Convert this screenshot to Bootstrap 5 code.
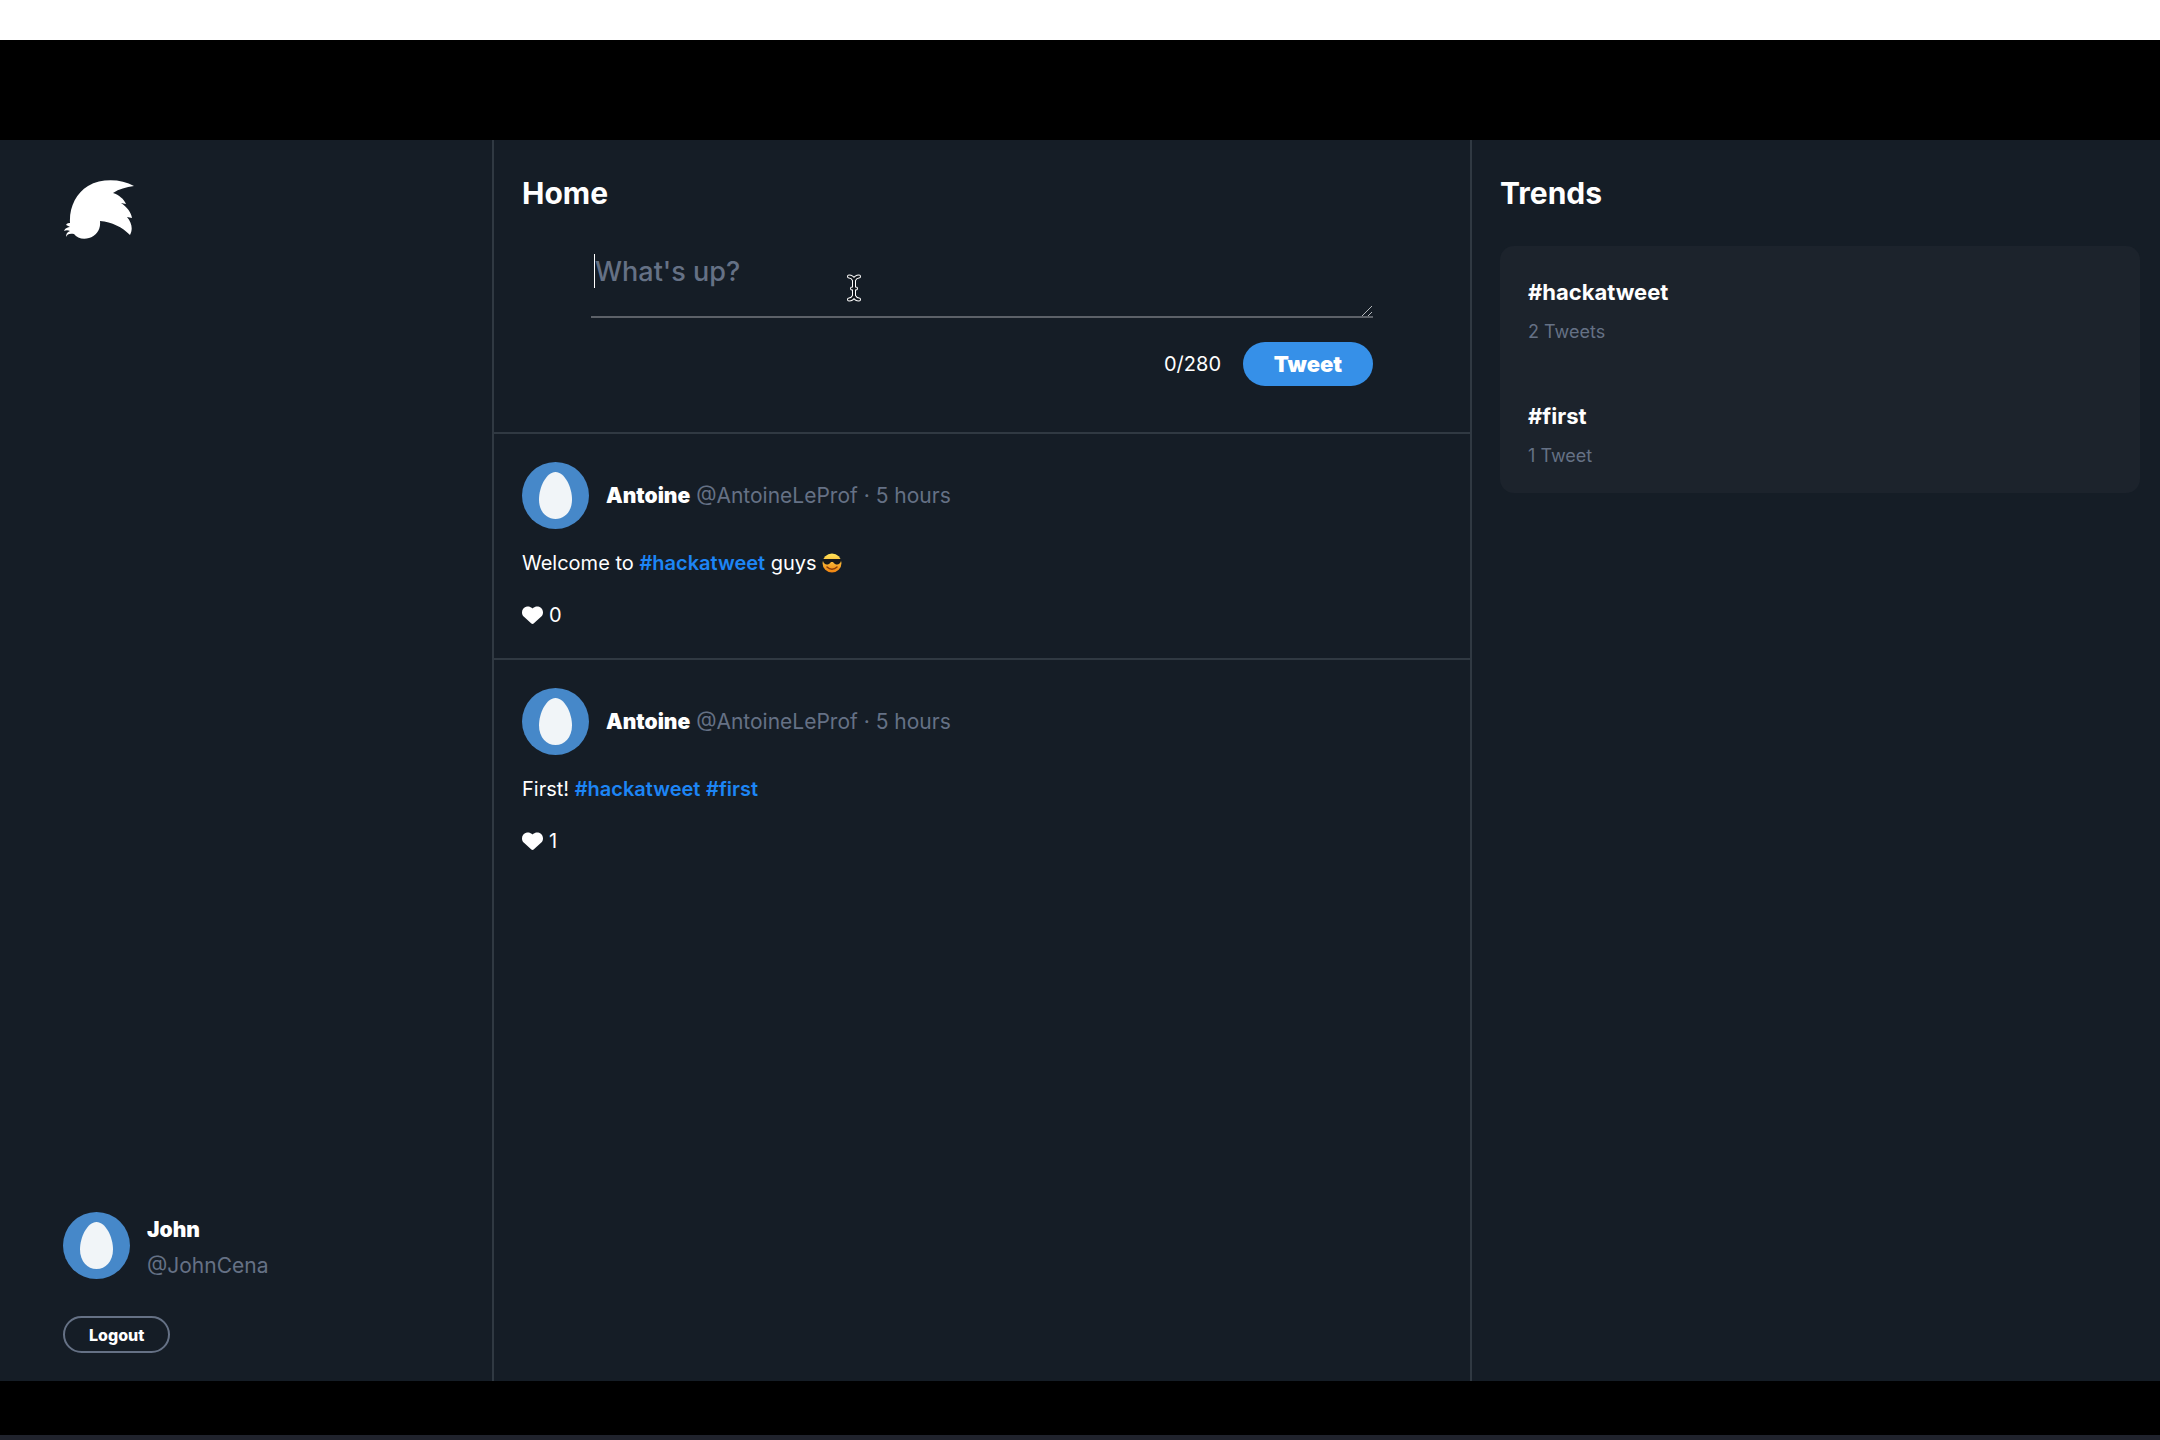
<!DOCTYPE html>
<html lang="en">
<head>
<meta charset="utf-8">
<meta name="viewport" content="width=device-width, initial-scale=1">
<title>Hackatweet</title>
<link href="https://cdn.jsdelivr.net/npm/bootstrap@5.3.0/dist/css/bootstrap.min.css" rel="stylesheet">
<style>
  body { font-family: Inter, "Liberation Sans", sans-serif; font-size: 20px; line-height: 28px; color: #fff; background: #000; }
  .strip-top { height: 40px; background: #fff; }
  .band-top { height: 100px; }
  .band-bottom { height: 54px; }
  .strip-bottom { height: 5px; background: #20232d; }
  .app { display: grid; grid-template-columns: minmax(0, 494fr) minmax(0, 978fr) minmax(0, 688fr); background: #151d26; }
  .side { padding: 40px 62px 28px 63px; border-right: 2px solid #303942; }
  .feed { border-right: 2px solid #303942; }
  .aside { padding: 35px 20px 35px 28px; }
  .brand { width: 74px; height: 60px; }
  .avatar { width: 67px; height: 67px; flex: none; }
  .who { margin-left: 17px; font-size: 21px; }
  .muted { color: #657185; }
  .heavy { font-weight: 900; }
  .title { font-size: 30px; line-height: 36px; font-weight: 700; }
  .user-lines { line-height: 36px; }
  .btn-logout { height: 37px; padding: 0 24px; font-size: 16px; line-height: 32px; font-weight: 800; color: #fff; border: 2px solid #657185; }
  .composer { padding: 35px 28px 46px; border-bottom: 2px solid #303942; }
  .compose-box { margin: 32px 69px 0; }
  .compose-input { height: 75px; padding: 11px 4px 0; font-size: 27px; line-height: 36px; font-weight: 500; color: #fff; background: transparent; border: 0; border-bottom: 2px solid #5c6168; resize: none; }
  .compose-input:focus { color: #fff; background: transparent; border-color: #5c6168; box-shadow: none; }
  .compose-input::placeholder { color: #657185; }
  .caret { position: absolute; left: 3px; top: 11px; width: 1px; height: 34px; background: #fff; }
  .grip { position: absolute; right: 1px; bottom: 2px; width: 10px; height: 10px; }
  .pointer { position: absolute; left: 255px; top: 30px; width: 16px; height: 30px; }
  .btn-tweet { width: 130px; height: 44px; padding: 0; font-size: 22px; line-height: 42px; color: #fff; background: #3690e8; border: 0; }
  .counter { margin-right: 22px; }
  .post { padding: 28px 28px 29px; }
  .post + .post { border-top: 2px solid #303942; }
  .post a { color: #1d85f5; font-weight: 600; text-decoration: none; }
  .emoji { width: 20px; height: 20px; vertical-align: -3px; }
  .like { color: #fff; font-size: 20px; line-height: 28px; gap: 6px; }
  .like:hover { color: #fff; }
  .heart { width: 21px; height: 18px; }
  .trend-card { margin-top: 35px; padding: 28px 28px 15px; border-radius: 14px; background: #1c232c; }
  .trend { padding-bottom: 44px; }
  .trend:last-child { padding-bottom: 0; }
  .trend a { display: block; font-size: 22px; line-height: 36px; font-weight: 700; color: #fff; text-decoration: none; }
  .trend-count { font-size: 18px; line-height: 44px; }
</style>
</head>
<body>
<svg class="d-none" aria-hidden="true">
  <symbol id="egg" viewBox="0 0 67 67">
    <circle cx="33.500" cy="33.500" r="33.500" fill="#4688c9"/>
    <path d="M33.500 10C42.500 10 50 25 50 37.500C50 49.500 42.500 57 33.500 57S17 49.500 17 37.500C17 25 24.500 10 33.500 10Z" fill="#f1f5f8"/>
  </symbol>
  <symbol id="heart" viewBox="0 32 512 448" preserveAspectRatio="none">
    <path fill="currentColor" d="M47.600 300.400L228.300 469.100c7.500 7 17.400 10.900 27.700 10.900s20.200-3.900 27.700-10.900L464.400 300.400c30.400-28.300 47.600-68 47.600-109.500v-5.800c0-69.900-50.500-129.500-119.400-141C347 36.500 300.600 51.400 268 84L256 96 244 84c-32.600-32.600-79-47.500-124.600-39.900C50.500 55.600 0 115.200 0 185.100v5.800c0 41.500 17.200 81.200 47.600 109.500z"/>
  </symbol>
</svg>
<div class="d-flex flex-column min-vh-100">
  <div class="strip-top"></div>
  <div class="band-top"></div>
  <div class="app flex-grow-1">
    <aside class="side d-flex flex-column justify-content-between">
      <svg class="brand" viewBox="0 0 74 60" role="img" aria-label="Hackatweet">
        <path fill="#fff" d="M7 43C6 28 13 13 25 6C39 -2 58 -1 71 6C63 7 56 9 50 13C56 15 61 19 63 24L58 23C64 27 68 32 69 38L64 37C69 43 70 49 67 55C59 47 49 42 37 41C38 50 33 56 26 58C20 60 14 58 11 54C7 53 4 54 3 57C3 54 4 52 7 51C5 50 3 50 1 51C2 48 5 47 7 47C5 46 4 45 3 45C4 43 6 43 7 43Z"/>
      </svg>
      <div>
        <div class="d-flex align-items-start mb-4 pb-2">
          <svg class="avatar" role="img" aria-label="John"><use href="#egg"/></svg>
          <div class="who user-lines">
            <div class="heavy">John</div>
            <div class="muted">@JohnCena</div>
          </div>
        </div>
        <button type="button" class="btn btn-logout rounded-pill">Logout</button>
      </div>
    </aside>
    <main class="feed">
      <section class="composer">
        <h1 class="title mb-0">Home</h1>
        <form class="compose-box">
          <div class="position-relative">
            <textarea class="form-control compose-input rounded-0 overflow-hidden" maxlength="280" placeholder="What's up?" aria-label="What's up?"></textarea>
            <span class="caret"></span>
            <svg class="grip" viewBox="0 0 10 10" fill="none" stroke="#b5b9bd"><path d="M0 10L10 0M6 10L10 6"/></svg>
            <svg class="pointer" viewBox="0 0 16 30" fill="none" stroke-linecap="round" stroke-linejoin="round">
              <path d="M3 3.500C6 3.500 7 5 8 7C9 5 10 3.500 13 3.500M8 7V23M6 15.500H10M3 26.500C6 26.500 7 25 8 23C9 25 10 26.500 13 26.500" stroke="#fff" stroke-width="4"/>
              <path d="M3 3.500C6 3.500 7 5 8 7C9 5 10 3.500 13 3.500M8 7V23M6 15.500H10M3 26.500C6 26.500 7 25 8 23C9 25 10 26.500 13 26.500" stroke="#10151b" stroke-width="2"/>
            </svg>
          </div>
          <div class="d-flex justify-content-end align-items-center mt-4">
            <span class="counter">0/280</span>
            <button type="button" class="btn btn-tweet heavy rounded-pill">Tweet</button>
          </div>
        </form>
      </section>
      <article class="post">
        <div class="d-flex align-items-center">
          <svg class="avatar" role="img" aria-label="Antoine"><use href="#egg"/></svg>
          <div class="who"><span class="heavy">Antoine</span> <span class="muted">@AntoineLeProf · 5 hours</span></div>
        </div>
        <p class="mt-3 pt-1 mb-4">Welcome to <a href="#hackatweet">#hackatweet</a> guys
          <svg class="emoji" viewBox="0 0 20 20" role="img" aria-label="smiling face with sunglasses">
            <defs><linearGradient id="face" x2="0" y2="1"><stop offset="0" stop-color="#ffe55a"/><stop offset="1" stop-color="#f0820f"/></linearGradient></defs>
            <circle cx="10" cy="10" r="9.500" fill="url(#face)"/>
            <path d="M1 6H19V8C18 12 14 13 11 9H9C6 13 2 12 1 8Z" fill="#17191c"/>
            <path d="M5 14C8 17 12 17 15 14" fill="none" stroke="#8a3c0a" stroke-width="1.500" stroke-linecap="round"/>
          </svg></p>
        <button type="button" class="like btn p-0 border-0 d-flex align-items-center"><svg class="heart" aria-label="Like"><use href="#heart"/></svg>0</button>
      </article>
      <article class="post">
        <div class="d-flex align-items-center">
          <svg class="avatar" role="img" aria-label="Antoine"><use href="#egg"/></svg>
          <div class="who"><span class="heavy">Antoine</span> <span class="muted">@AntoineLeProf · 5 hours</span></div>
        </div>
        <p class="mt-3 pt-1 mb-4">First! <a href="#hackatweet">#hackatweet</a> <a href="#first">#first</a></p>
        <button type="button" class="like btn p-0 border-0 d-flex align-items-center"><svg class="heart" aria-label="Like"><use href="#heart"/></svg>1</button>
      </article>
    </main>
    <aside class="aside">
      <h2 class="title mb-0">Trends</h2>
      <div class="trend-card">
        <div class="trend"><a href="#hackatweet">#hackatweet</a><div class="trend-count muted">2 Tweets</div></div>
        <div class="trend"><a href="#first">#first</a><div class="trend-count muted">1 Tweet</div></div>
      </div>
    </aside>
  </div>
  <div class="band-bottom"></div>
  <div class="strip-bottom"></div>
</div>
<script src="https://cdn.jsdelivr.net/npm/bootstrap@5.3.0/dist/js/bootstrap.bundle.min.js"></script>
</body>
</html>
